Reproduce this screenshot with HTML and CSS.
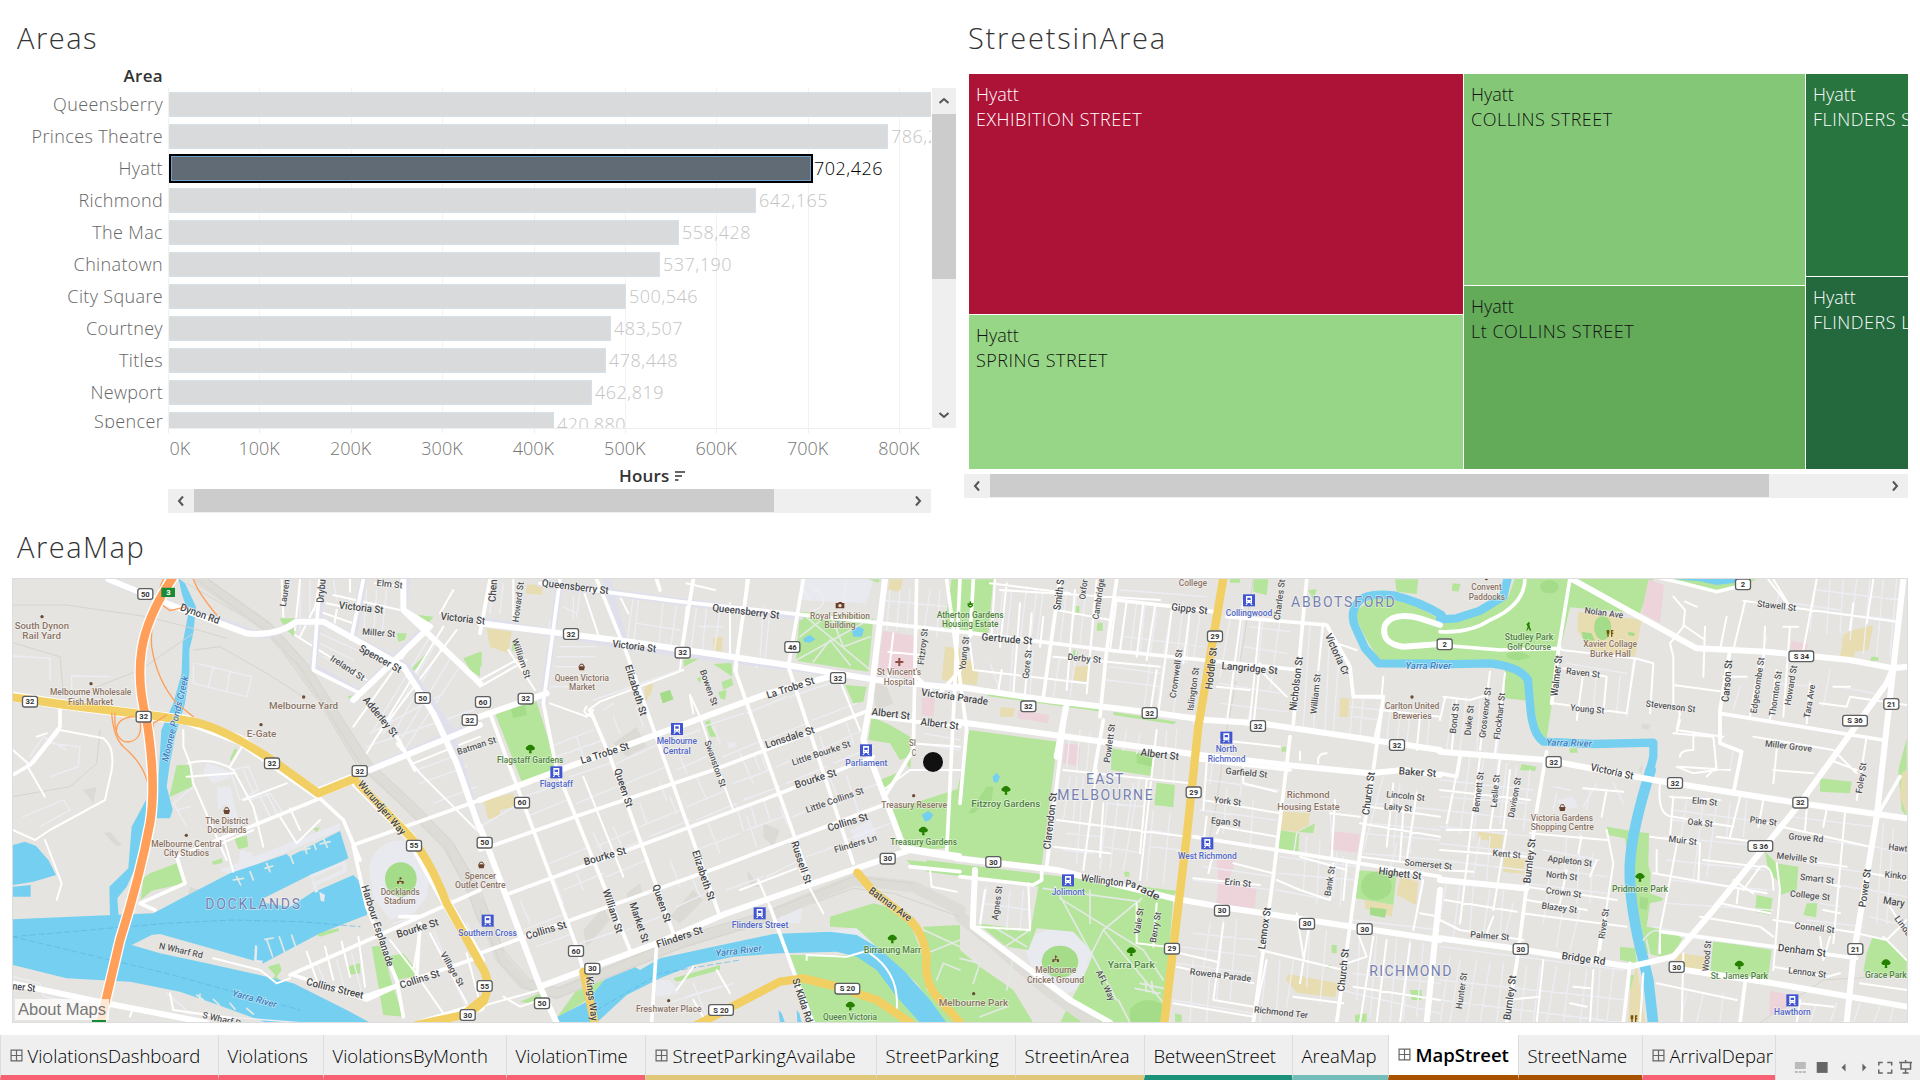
FILE: index.html
```html
<!DOCTYPE html>
<html lang="en">
<head>
<meta charset="utf-8">
<title>MapStreet</title>
<link rel="stylesheet" href="styles.css">
</head>
<body>
<svg class="defs" aria-hidden="true">
  <symbol id="chev" viewBox="0 0 12 12"><path d="M8 1.5 4 6l4 4.5" fill="none" stroke="#555" stroke-width="2"/></symbol>
  <symbol id="grid" viewBox="0 0 12 12"><path d="M1 1h10v10H1zM6 1v10M1 6h10" fill="none" stroke="#666" stroke-width="1.1"/></symbol>
</svg>
<main class="dashboard">
  <div class="top">
    <section class="areas">
      <h2 class="title">Areas</h2>
      <div class="head">Area</div>
      <div class="chart">
        <div class="plot">
          <div class="row"><span class="name">Queensberry</span><i class="bar" style="width:780px"></i></div>
          <div class="row"><span class="name">Princes Theatre</span><i class="bar" style="width:719px"></i><span class="val">786,249</span></div>
          <div class="row sel"><span class="name">Hyatt</span><i class="bar" style="width:644px"></i><span class="val">702,426</span></div>
          <div class="row"><span class="name">Richmond</span><i class="bar" style="width:587px"></i><span class="val">642,165</span></div>
          <div class="row"><span class="name">The Mac</span><i class="bar" style="width:510px"></i><span class="val">558,428</span></div>
          <div class="row"><span class="name">Chinatown</span><i class="bar" style="width:491px"></i><span class="val">537,190</span></div>
          <div class="row"><span class="name">City Square</span><i class="bar" style="width:457px"></i><span class="val">500,546</span></div>
          <div class="row"><span class="name">Courtney</span><i class="bar" style="width:442px"></i><span class="val">483,507</span></div>
          <div class="row"><span class="name">Titles</span><i class="bar" style="width:437px"></i><span class="val">478,448</span></div>
          <div class="row"><span class="name">Newport</span><i class="bar" style="width:423px"></i><span class="val">462,819</span></div>
          <div class="row last"><span class="name">Spencer</span><i class="bar" style="width:385px"></i><span class="val">420,880</span></div>
        </div>
        <div class="vscroll"><svg class="up"><use href="#chev"/></svg><i class="vthumb"></i><svg class="down"><use href="#chev"/></svg></div>
      </div>
      <div class="ticks"></div>
      <div class="axis"><span>0K</span><span>100K</span><span>200K</span><span>300K</span><span>400K</span><span>500K</span><span>600K</span><span>700K</span><span>800K</span></div>
      <div class="axis-title">Hours <svg width="11" height="11" viewBox="0 0 11 11"><path d="M0 1h10M0 5h7M0 9h3.500" stroke="#666" stroke-width="2"/></svg></div>
      <div class="hscroll left-scroll"><svg><use href="#chev"/></svg><i class="hthumb"></i><svg class="right"><use href="#chev"/></svg></div>
    </section>
    <section class="streets">
      <h2 class="title">StreetsinArea</h2>
      <div class="treemap">
        <div class="col col1"><div class="cell red">Hyatt<br><b>EXHIBITION STREET</b></div><div class="cell g1">Hyatt<br><b>SPRING STREET</b></div></div>
        <div class="col col2"><div class="cell g2">Hyatt<br><b>COLLINS STREET</b></div><div class="cell g3">Hyatt<br><b>Lt COLLINS STREET</b></div></div>
        <div class="col col3"><div class="cell g4">Hyatt<br><b>FLINDERS STREET</b></div><div class="cell g5">Hyatt<br><b>FLINDERS LANE</b></div></div>
      </div>
      <div class="hscroll right-scroll"><svg><use href="#chev"/></svg><i class="hthumb"></i><svg class="right"><use href="#chev"/></svg></div>
    </section>
  </div>
  <section class="area-map">
    <h2 class="title">AreaMap</h2>
    <div class="map-frame">
      <svg id="map" class="map" viewBox="39 27 5682 1329" preserveAspectRatio="none"></svg>
      <span class="about">About Maps</span>
    </div>
  </section>
  <nav class="tabs">
    <a class="tab pink"><svg><use href="#grid"/></svg>ViolationsDashboard</a>
    <a class="tab pink">Violations</a>
    <a class="tab pink">ViolationsByMonth</a>
    <a class="tab pink">ViolationTime</a>
    <a class="tab sand"><svg><use href="#grid"/></svg>StreetParkingAvailabe</a>
    <a class="tab sand">StreetParking</a>
    <a class="tab sand">StreetinArea</a>
    <a class="tab green">BetweenStreet</a>
    <a class="tab teal">AreaMap</a>
    <a class="tab brown active"><svg><use href="#grid"/></svg>MapStreet</a>
    <a class="tab brown">StreetName</a>
    <a class="tab pink clip"><svg><use href="#grid"/></svg>ArrivalDepar</a>
    <svg class="tools" viewBox="0 0 144 45" width="144" height="45">
      <path d="M19 27h11v7H19zM19 36h3v2h-3zM23 36h3v2h-3zM27 36h3v2h-3z" fill="#bbb"/>
      <path d="M41 27h11v11H41z" fill="#666"/>
      <path d="M70 28.500v8l-4-4zM87 28.500v8l4-4z" fill="#666"/>
      <path d="M103.500 30.500v-3h4M112 27.500h4.500v3M116.500 34.500v3.500H112M107.500 38h-4v-3.500M124 27.500h13M126 27.500v6.500h9.500v-6.500M130.500 34v4M127.500 38h6M130.500 25v2" fill="none" stroke="#666" stroke-width="1.500"/>
    </svg>
  </nav>
</main>
<script src="map.js"></script>
</body>
</html>
```
FILE: styles.css
```css
* { box-sizing: border-box; }
body { margin: 0; background: #fff; font-family: "Open Sans", "Noto Sans", sans-serif; font-weight: 330; color: #333; overflow: hidden; }
.defs { position: absolute; width: 0; height: 0; }
.dashboard { display: flex; flex-direction: column; width: 1920px; height: 1080px; }
.top { display: flex; height: 520px; }
.areas { width: 956px; }
.title { margin: 0; font-size: 29px; font-weight: 310; line-height: 38px; letter-spacing: 1.5px; color: #333; }
.areas .title { padding: 19px 0 0 17px; height: 64px; }
.head { width: 163px; height: 24px; line-height: 24px; text-align: right; font-size: 17px; font-weight: 600; letter-spacing: .3px; color: #333; }
.chart { display: flex; height: 340px; }
.plot { width: 931px; overflow: hidden; background: repeating-linear-gradient(90deg, #f2f2f2 0 1px, transparent 1px 91.4px) 168px 0 no-repeat; }
.row { display: flex; align-items: flex-start; height: 32px; font-size: 18px; line-height: 33px; white-space: nowrap; }
.name { flex: none; width: 163px; margin-right: 6px; text-align: right; letter-spacing: .35px; color: #666; }
.bar { flex: none; height: 25px; margin-top: 4px; background: #d8dadc; border: 1px solid #d6e0e8; border-left: 0; }
.val { margin-left: 3px; color: #c4c4c4; letter-spacing: .5px; }
.sel .bar { height: 29px; margin-top: 2px; background: #616b75; border: 2px solid #000; box-shadow: inset 0 0 0 1px #6c9fca; }
.sel .val { margin-left: 1px; color: #000; }
.last .name { line-height: 27px; }
.vscroll { display: flex; flex-direction: column; align-items: center; width: 24px; margin-left: 1px; background: #efefef; }
.vscroll svg { width: 12px; height: 12px; margin: 7px 0; }
.up { transform: rotate(90deg); }
.vscroll .down { transform: rotate(-90deg); margin-top: auto; }
.vthumb { width: 24px; height: 165px; background: #ccc; }
.ticks { width: 763px; height: 5px; margin-left: 168px; border-top: 1px solid #eee; background: repeating-linear-gradient(90deg, #eee 0 1px, transparent 1px 91.4px); }
.axis { display: flex; margin-left: 213.500px; height: 31px; font-size: 18px; line-height: 30px; color: #757575; }
.axis span { flex: none; width: 91.400px; text-align: center; }
.axis span:first-child { width: 45px; margin-left: -45px; padding-left: 1px; text-align: left; }
.axis-title { height: 25px; padding-left: 619px; font-size: 17px; line-height: 24px; font-weight: 600; letter-spacing: .2px; color: #333; }
.axis-title svg { margin-left: 1px; }
.hscroll { display: flex; align-items: flex-start; height: 24px; background: #efefef; }
.hscroll svg { width: 12px; height: 12px; margin: 6px 7px; }
.hscroll .right { transform: scaleX(-1); margin-left: auto; }
.hthumb { height: 23px; background: #ccc; }
.left-scroll { width: 763px; margin-left: 168px; }
.left-scroll .hthumb { width: 580px; }
.streets { width: 944px; margin-left: 8px; }
.streets .title { padding: 19px 0 0 4px; height: 74px; letter-spacing: 1.8px; }
.treemap { display: flex; gap: 1px; width: 939px; height: 395px; margin-left: 5px; }
.col { display: flex; flex-direction: column; gap: 1px; overflow: hidden; }
.col1 { width: 494px; } .col2 { width: 341px; } .col3 { width: 102px; }
.cell { padding: 8px 0 0 7px; font-size: 18px; line-height: 25px; white-space: nowrap; color: #111; flex: 1; }
.cell b { font-weight: inherit; letter-spacing: .5px; }
.red { flex: 0 0 240px; background: #ad1237; color: #fff; }
.g1 { background: #97d686; }
.g2 { flex: 0 0 211px; background: #84c877; }
.g3 { background: #63aa59; }
.g4 { flex: 0 0 202px; background: #29753f; color: #fff; }
.g5 { background: #24693d; color: #fff; }
.right-scroll { margin-top: 5px; width: 944px; }
.right-scroll .hthumb { width: 779px; }
.area-map { height: 515px; }
.area-map .title { height: 58px; padding: 8px 0 0 17px; }
.map-frame { position: relative; width: 1896px; height: 445px; margin-left: 12px; border: 1px solid #ddd; overflow: hidden; }
.map { display: block; width: 1894px; height: 443px; background: #e6e4e0; }
.about { position: absolute; left: 2px; bottom: 2px; padding: 0 3px; font: 400 16.500px/21px "Liberation Sans", sans-serif; color: #777; background: rgba(255,255,255,.75); }
.tabs { display: grid; grid-template-columns: 218px 105px 183px 139px 231px 139px 129px 148px 96px 130px 124px 133px 145px; height: 45px; background: #efefef; }
.tab { display: flex; align-items: center; height: 45px; padding: 2px 0 0 8.500px; border-left: 1px solid #ddd; border-bottom: 5px solid; font-size: 18.500px; font-weight: 310; line-height: 26px; color: #000; white-space: nowrap; overflow: hidden; }
.tab > svg { flex: none; width: 13px; height: 13px; margin: 0 5px 2px 0; }
.pink { border-bottom-color: #f76174; } .sand { border-bottom-color: #dfc678; letter-spacing: .15px; } .green { border-bottom-color: #1b9179; } .teal { border-bottom-color: #74bcba; } .brown { border-bottom-color: #a85200; }
.active { padding-top: 0; background: #fff; font-weight: 650; }
.tools { border-left: 1px solid #ddd; }

.park { fill: #b5e59b; } .pitch { fill: #a5dc8a; } .ped { fill: #e9eaf0; } .water { fill: #75cff0; } .land { fill: #e6e4e0; }
.school { fill: #e8dcb1; } .hospital { fill: #ecd4da; } .shade { fill: #dcdad4; }
.line { fill: none; stroke-linejoin: round; stroke-linecap: round; }
.river { stroke: #75cff0; stroke-width: 25; } .stream { stroke: #75cff0; stroke-width: 32; }
.rail { stroke: #d5d4cf; stroke-width: 3; } .yard { stroke: #dddcd7; stroke-width: 34; }
.faint { stroke: #edeef5; stroke-width: 4; } .minor { stroke: #fff; stroke-width: 6; } .street { stroke: #fff; stroke-width: 11; }
.case { stroke: #dfe0ec; stroke-width: 22; } .major { stroke: #fff; stroke-width: 18; } .path { stroke: #e3e9e4; stroke-width: 5; }
.yellow { stroke: #f2cf62; stroke-width: 25; } .ycase { stroke: #fff; stroke-width: 30; }
.motor { stroke: #ff9f59; stroke-width: 26; } .mcase { stroke: #fff; stroke-width: 34; } .ramp { stroke: #ff9f59; stroke-width: 4; }
.dash { stroke: #5ab4e2; stroke-width: 2; stroke-dasharray: 16 10; }
.map text { font-family: Roboto, sans-serif; font-weight: 500; paint-order: stroke; stroke: rgba(255,255,255,.55); stroke-width: 4px; }
.map .s { font-size: 31px; fill: #45474a; } .map .m { font-size: 27px; fill: #515356; }
.map .p { font-size: 27px; fill: #8b7365; } .map .g { font-size: 27px; fill: #4f8240; } .map .b { font-size: 27px; fill: #5066c8; }
.map .w { font-size: 29px; fill: #3d7fc0; font-style: italic; } .map .d { font-size: 42px; fill: #7481b1; font-weight: 400; }
.shield { fill: #fff; stroke: #5c5e60; stroke-width: 4; } .map .n { font-size: 23px; font-weight: 700; fill: #333; stroke: none; }
.map .n.state { fill: #fff; }
```
FILE: map.js
```javascript
// The map is drawn in four side-by-side tiles, each 1440 units wide.
const TILE = 1440;
const svg = document.getElementById('map');
const NS = 'http://www.w3.org/2000/svg';
function add(tag, attrs, text) {
  const el = document.createElementNS(NS, tag);
  for (const k in attrs) el.setAttribute(k, attrs[k]);
  if (text) el.textContent = text;
  svg.appendChild(el);
  return el;
}
function layer(cls, tiles) {
  tiles.forEach((d, i) => { if (d) add('path', { d, class: cls, transform: `translate(${i * TILE} 0)` }); });
}

layer('shade', [
  'M312 790L330 785L365 825L350 830ZM250 660L290 650L280 700ZM570 950L600 960L560 1000Z',
  'M400 520L470 470L500 530L440 560ZM570 1040L640 960L670 990L600 1060ZM850 760L900 780L880 830L850 800ZM800 900L840 950L810 950ZM440 970L480 940L490 980L440 990ZM310 1080L370 1010L390 1050L320 1130ZM1170 330L1220 350L1240 400L1190 420Z',
  '', 'M605 460L632 465L625 480L605 475ZM595 600L610 585L605 610Z'
]);
layer('ped', [
  'M690 625L640 640L610 610L620 580L680 600ZM650 650L690 650L720 770L700 780L680 700L655 720ZM660 900L1020 760L1020 780L850 850L690 915ZM720 840L760 850L740 900L715 890ZM1110 920A92 90 0 1 1 1290 920L1280 980L1240 1030L1170 1050L1120 980Z',
  'M960 28L1180 28L1160 100L960 90ZM890 1010L930 1030L970 1000L960 1060L900 1060ZM1110 780L1170 750L1190 790L1130 820ZM970 1090L1170 1070L1210 1120L1160 1130L1100 1100L980 1105ZM520 1230L570 1230L600 1270L530 1280ZM740 520L770 515L770 530L745 535Z',
  'M195 1130Q220 1080 300 1075Q390 1090 400 1150Q400 1250 320 1270Q220 1260 195 1130ZM690 450L720 450L700 465Z',
  'M350 690L400 680L415 710L370 720Z'
]);
layer('park', [
  'M838 145L885 145L882 200L860 180ZM1230 300L1280 250L1283 260L1235 308ZM1190 190L1220 190L1215 210L1195 215ZM1254 135L1300 140L1280 165ZM1390 265L1440 245V320L1410 300ZM1042 380L1068 372L1055 392ZM530 585L568 585L576 650L508 682ZM705 535L712 540L692 575L690 565ZM703 805L740 797L745 830L715 838ZM430 925L450 910L530 880L555 940L455 962L422 990ZM635 875L665 865L668 878L640 885ZM803 1190L838 1180L845 1200L830 1220L860 1250L815 1240L825 1215ZM1040 1190L1080 1180L1080 1210L1045 1215ZM1115 1130L1150 1125L1170 1220L1210 1340L1150 1335ZM1160 1160L1210 1150L1250 1200L1240 1220L1190 1230ZM942 1090L1015 1075L1018 1082L960 1100ZM940 775L960 772L950 787Z',
  'M45 430L170 395L235 605L125 635ZM0 245L5 245V290H0ZM960 125L1180 145L1165 305L948 272ZM610 270L665 262L612 290ZM700 282L755 278L757 320ZM540 370L570 360L580 388L548 400ZM725 335L755 325L760 345L730 360ZM715 365L740 360L735 390L720 385ZM650 325L665 320L660 340ZM675 455L690 450L695 475L710 500L690 500ZM1095 345L1160 350L1150 395L1120 400ZM1175 440L1230 465L1290 500L1290 560L1260 570L1230 520L1165 510ZM1275 570L1295 545L1290 600ZM1200 630L1260 605L1220 660ZM1230 720L1300 700L1440 655V830L1330 840L1265 830ZM1415 28H1440V185H1390ZM1280 870L1440 885V910L1300 895ZM1165 28H1200L1195 38ZM1050 1040L1180 1000L1220 1010L1290 1060L1330 1160L1340 1260L1440 1358H1390L1310 1240L1190 1130L1130 1075L1050 1070ZM930 1155L1170 1155L1210 1220L1270 1290L1320 1358H990L950 1210ZM1330 1070L1440 1065V1358L1370 1290L1345 1200ZM220 1358L290 1260L350 1235L380 1230L320 1290L240 1340ZM120 1295L180 1270L220 1310ZM400 1185L450 1170L450 1190L400 1205ZM580 1225L720 1185L720 1200L590 1235ZM98 215L108 215L108 245L95 240Z',
  'M0 28H100L85 190L0 180ZM28 480L292 515L245 885L-45 850ZM455 535L582 555L575 618L453 600ZM590 638L645 645L640 712L583 705ZM-100 870L100 895L650 962L640 980L610 1358H300L380 1200L400 1150L340 1085L230 1075L205 1140L210 1090L235 950L-100 905ZM0 1140L60 1190L160 1260L220 1358H0ZM90 370L430 410L425 425L80 378ZM460 425L650 455L640 463L460 435ZM960 780L1018 790L1015 850L950 840ZM1015 785L1065 760L1060 790ZM1190 900L1310 910L1300 1005L1188 985ZM880 28H925L920 75L880 65ZM1305 28H1375L1370 72L1310 65ZM340 108H358V130H340ZM412 158H428V182H410ZM340 240H353V258H338ZM1205 110L1240 80L1310 85L1380 115L1445 150V275H1260L1215 200L1180 130ZM1045 60L1070 58L1060 90ZM965 530H978V545H965ZM1350 1260H1385V1290H1355ZM645 1330L665 1335V1358H645ZM1185 1335L1220 1330V1358H1185ZM1115 1125H1130V1150H1115ZM1100 1185H1115V1195H1100ZM492 905H508V920H495ZM50 1060L210 1080L205 1140L140 1130ZM810 25H840V38H810Z',
  'M0 155L60 150L150 115L205 80L225 24H640L600 130L390 112L360 240L320 505L290 490L270 320L220 285H0ZM195 290L265 330L260 392L195 385ZM38 40L62 42L55 65L35 62ZM500 770L590 785L627 790L625 885L632 910L630 970L670 985L665 992L630 1000L620 1070L735 1090L705 1145L665 1160L620 1150L585 985L555 805L505 795ZM540 1130L585 1135L590 1180L540 1170ZM820 1110L995 1140L985 1220L970 1235L810 1215ZM975 845L1010 880L1075 890L1070 960L1020 975L1020 940L985 905ZM950 975L998 985L990 1035L945 1025ZM1100 1000L1132 1000L1128 1042L1090 1035ZM1140 625L1235 635L1230 670L1140 665ZM245 582L290 590L285 603L240 600ZM1298 1100L1340 1110L1400 1165V1225L1270 1205L1280 1150ZM1400 505V740L1385 720L1375 600ZM655 28L740 45L820 68L890 55L950 28H900L850 35L780 24ZM572 1215L590 1215L600 1260L570 1260ZM1295 260H1315V272H1290ZM388 535H412V548H390Z'
]);
layer('school', [
  '', 'M20 175L95 185L85 250L30 230ZM140 45L190 42L185 75L138 70ZM700 205L728 200L725 245L700 240ZM495 350L520 340L515 365L495 400ZM10 690L100 670L105 710L60 720L60 740L25 748ZM1395 230L1440 235V340L1385 330ZM1228 28H1268L1262 65L1225 60Z',
  'M340 290L385 288L380 335L338 330ZM0 265L30 270L55 310L50 345L0 340ZM122 412L165 415L160 440L120 440ZM965 725L1050 730L1045 765L1010 785L960 780ZM985 1212L1030 1220L1135 1240L1125 1282L1010 1268L978 1230ZM1320 920L1375 935L1368 1005L1310 975ZM1215 990L1300 1005L1295 1040L1215 1015ZM1140 385L1168 385L1165 440L1138 440Z',
  'M415 125L605 150L585 260L450 240L412 180ZM1210 195L1240 180L1300 165L1285 240L1245 245L1240 270L1200 265ZM115 785L190 795L185 835L145 835L145 810L115 808ZM190 860L255 868L250 912L190 905ZM720 1150L800 1160L800 1205L745 1200L705 1170ZM590 1180L600 1260L615 1358H565L570 1265ZM1385 610L1400 600V735L1380 680Z'
]);
layer('hospital', [
  '', 'M1210 182L1315 200L1310 330L1195 300L1200 240ZM1325 382L1365 385L1360 440L1325 435Z',
  'M175 420L268 435L265 460L172 445ZM315 520L362 525L355 588L308 580ZM770 870L825 870L820 895L800 940L890 950L885 1015L768 1005L775 940ZM1118 783L1200 793L1193 848L1110 838Z',
  'M625 28L672 45L660 158L605 130ZM1055 212L1105 222L1100 242L1050 238ZM990 1262L1055 1275L1040 1315L988 1335Z'
]);
layer('pitch', [
  'M1155 925A47 48 0 1 1 1250 925A47 55 0 1 1 1155 925Z', 'M90 410L135 405L140 435L100 445ZM540 370L570 360L580 388L548 400Z',
  'M245 1175A55 48 0 1 1 355 1175A55 48 0 1 1 245 1175ZM530 550L580 558L575 590L530 580ZM1203 950A46 45 0 1 1 1295 950A46 40 0 1 1 1203 950ZM1230 1012L1280 1018L1275 1043L1230 1035ZM25 730L80 650L100 650L95 690L40 730ZM510 1320A60 50 0 0 1 620 1320L615 1358H510Z',
  'M462 170A26 32 0 1 1 514 170A26 40 0 1 1 462 170ZM425 185L455 190L465 212L430 210ZM565 185L585 190L582 198L565 196ZM300 50A28 20 0 1 1 356 50A28 20 0 1 1 300 50ZM200 250Q240 235 270 260Q230 280 200 262ZM600 980L625 985L620 1020L598 1015Z'
]);
layer('water', [
  'M535 24L555 40L588 110L580 190L568 240L568 310L555 400L525 500L508 590L500 650L518 720L510 745L470 745L474 650L484 480L520 400L545 310L548 220L565 130L545 70ZM438 690L440 790L412 880L380 950L352 985L356 1040L330 1040L328 950L385 895L395 770ZM38 825L75 815L108 828L145 870L168 915L100 935L38 945ZM38 950L92 945V980H38ZM38 1048L460 1030L545 985L690 910L860 852L868 860L1020 783L1045 865L930 920L945 965L1060 915L1075 930L1090 985L1105 1020L1100 1035L960 1090L790 1180L650 1140L480 1092L455 1095L395 1125L480 1150L620 1180L800 1220L880 1240L1040 1320L1110 1358H800L640 1300L540 1265L390 1235L200 1225L38 1185Z',
  'M230 1342L320 1295L385 1215L460 1188L480 1200L540 1165L700 1130L880 1092L1050 1085L1130 1095L1190 1130L1270 1200L1350 1290L1400 1358H1320L1250 1280L1190 1200L1130 1160L1070 1145L900 1150L760 1160L640 1185L540 1225L440 1275L350 1358H230ZM970 205L990 195L1006 208L990 218L972 215ZM1115 180L1135 168L1152 178L1145 200L1120 200ZM1325 735L1345 722L1360 735L1350 750L1335 755ZM1065 158L1078 152L1080 165ZM895 1320L905 1330L915 1358H900ZM950 1320L958 1330L965 1358H952Z',
  'M98 620L110 608L120 620L112 638L100 635Z', 'M700 28L780 34L830 45L885 38L900 24Z'
]);
layer('land', ['M780 990L930 915L1040 870L1048 898L1060 912L940 965L870 1010L800 1000Z']);
layer('ped', ['M930 915L1035 872L1042 905L950 945L945 935L1030 898L1028 885L940 922L955 965L945 968ZM958 965L975 975L972 995L962 992ZM765 1125L772 1128L770 1170L790 1172L785 1180L762 1175Z']);
layer('line path', ['M710 920L722 945M700 930L730 925M750 905L760 930M800 880L810 905M795 895L818 888M870 855L880 880M912 825L920 850M905 840L930 835M938 812L948 838M968 800L982 832M960 822L990 815M800 1108L818 1160M838 1100L855 1150M875 1095L890 1140M795 1108L820 1104M590 1275L610 1290M600 1272L598 1298M640 1288L658 1305M690 1300L705 1318M740 1315L760 1332']);
layer('line river', ['', '', 'M1445 135Q1380 95 1300 76Q1220 68 1195 95Q1165 130 1190 180L1215 235L1255 280L1445 281', 'M203 24L190 80L120 122L50 145L0 148M0 283L150 280Q240 290 264 330L270 400Q275 490 310 515L460 522L640 518L640 560L620 640']);
layer('line stream', ['', '', '', 'M632 600Q575 780 570 880Q565 980 600 1130L625 1230L640 1365']);
layer('line dash', ['M38 1100L500 1060L700 1050L900 1055L1080 1070M38 1100L500 1210L900 1320', 'M350 1320L540 1210L780 1170']);
layer('line rail', [
  'M38 105L200 105L440 140L560 170L680 205M38 218L180 260L190 370M240 370L420 300L580 190M580 240L660 230L800 310L910 380M300 480L290 580L210 650L38 680M560 40L800 180L960 400L1080 600',
  '', 'M880 28L850 220L800 480L770 700L745 820', 'M960 1358L1060 1290L1150 1230L1400 1215'
]);
layer('line yard', [
  'M600 28L800 170L900 280L1010 450L1100 590L1230 710L1340 820L1410 940L1445 1040',
  'M0 1000L60 1160L130 1240L230 1270L400 1200L600 1120L860 1040L1000 980L1120 930L1300 950L1440 1020', 'M0 1040L100 1120L260 1260L400 1360'
]);
layer('line rail', [
  'M590 28L800 185L900 290L1000 450L1090 595L1220 720L1335 835L1400 960L1440 1060M625 28L815 165L925 285L1030 450L1115 580L1250 705L1360 820L1430 940',
  'M0 960L70 1140L150 1230L240 1255L400 1185L600 1100L860 1025L1000 970L1120 920L1300 940M0 1020L60 1180L130 1250L230 1285L400 1215L600 1135L860 1055M1000 1000L1120 955L1240 970L1440 1040'
]);
layer('line path', [
  '', 'M965 130L1165 295M1175 145L950 270M960 200L1050 130L1090 230L1170 200M1000 275L1050 210L1110 285M1300 1065L1440 1130M1340 1150L1440 1110M1370 1230L1390 1180L1440 1200',
  'M285 950L470 1290M300 985L550 1140L610 1230M545 985L430 1080L380 1180M390 960V1060M250 955L540 995M50 1060L160 1160L140 1260M100 1070L200 1130M120 1140L210 1080M0 1165L60 1180L40 1240M430 1080L620 1310M525 1255L600 1270M540 1240L610 1255M555 1230L560 1265M575 1235L580 1270M475 1290L510 1358M60 1340L140 1310L130 1290',
  'M610 1110Q640 1070 660 1085L655 1150M620 1110L630 1160'
]);
layer('line faint', [
  'M38 258L150 265V330M215 370V318L330 320M590 280L755 320L740 380L580 340V280M640 290L625 350M690 305L680 365M150 520L240 530L235 590L150 620M90 560L130 500L200 540M70 740L190 690L210 720L120 770M690 600L745 590L775 660L720 690ZM730 600L760 670M750 690L810 670L850 730L780 760ZM780 680L810 740M800 670L830 730M580 650L520 700L560 770M530 720L570 710M900 28V180M930 28V170M960 190L1070 240M960 220L1060 270M1000 28L1010 90M1100 60L1090 200M1130 60L1120 200M1160 60L1145 200M890 200L1100 330M970 260L1090 330M1290 200L1120 480M1310 215L1150 490M1320 240L1170 510M1360 250L1190 530M1380 290L1200 560M1100 530L1420 420M1110 490L1330 370M1250 600L1360 560M1260 640L1400 590M1300 700L1430 650M1180 1060L1290 1030M1300 1080L1400 1320M1400 1060L1440 1150M1010 1170L1040 1280M1055 1150L1085 1270M950 1180L980 1250M38 1220L120 1240L130 1280L250 1300M500 1270L560 1320M550 1330L900 1358',
  'M40 40L30 130M70 40L60 130M115 80L110 180M250 110L290 130M280 80V150M300 60L290 140M210 150L195 350M225 190L205 370M240 230H350M230 260H345M225 290H300M220 320H300M215 350H310M460 80L440 220M475 90L460 230M550 90L535 240M590 100L570 250M650 110L630 260M680 110L665 260M720 120L700 265M850 110L840 270M870 120L855 270M660 170H730M470 160L600 180M340 390L600 300M210 530L340 480M230 560L370 510M400 440L420 490M60 520L130 700M0 770L120 700M130 680L250 640M270 620L390 580M410 580L520 530M520 530L660 480M670 470L790 430M800 430L920 380M930 380L1080 330M140 740L260 690M290 700L410 650M440 640L560 590M590 600L700 550M730 560L850 510M860 510L980 460M1000 450L1130 400M210 880L330 830M350 830L460 780M480 770L600 720M620 710L740 660M760 640L870 600M890 590L1010 540M1020 540L1150 480M240 920L350 870M370 860L490 810M510 800L630 750M650 750L770 700M790 690L900 650M920 640L1040 590M1060 580L1180 530M250 960L370 910M380 920L500 870M650 840L780 790M800 780L910 740M940 740L1060 690M1080 680L1200 640M130 1080L260 1030M170 1130L280 1090M300 1120L420 1080M440 1080L540 1040M590 1010L700 960M740 960L850 920M860 920L960 870M980 860L1090 820M1100 810L1230 760M290 500L310 560M470 410L490 470M400 400L370 420M820 550L840 600M840 545L860 600M810 700L830 770M850 690L870 750M570 680L590 730M540 640L560 690M680 750L720 850M800 740L830 830M400 770L430 840M480 700L500 760M340 790L370 850M570 870L600 950M630 910L660 980M220 920L250 1000M290 910L310 960M120 990L150 1060M780 550L820 640M710 590L740 670M650 620L680 690M770 710L790 780M700 470L720 520M600 560L620 610M900 710L920 760M1020 500L1040 560M1100 460L1120 520M1040 600L1080 700M1100 620L1140 740M1230 60L1220 180M1260 60L1250 180M1290 60L1280 180M1350 60L1330 200M1380 60L1370 200M1200 90L1400 110M1330 490L1440 510M1310 520L1440 540M620 1280L720 1250M640 1240L680 1340M560 1300L760 1240M1100 28L1090 100M1000 60A30 30 0 1 1 1000 120M970 60L990 90',
  'M130 60L110 210M155 60L140 210M200 50L180 220M230 60L210 230M250 60L230 220M320 60L300 220M350 80L330 230M380 40L360 220M400 100L390 230M500 100L480 240M530 100L510 250M555 100L540 250M590 120L570 260M635 120L610 260M670 100L650 270M690 110L680 280M720 130L700 270M480 60L740 80M490 200L730 230M90 280L120 360M160 220L150 360M220 240L210 370M300 260L280 380M350 240L330 380M450 290L600 310M440 330L600 350M570 280L550 430M610 280L590 430M660 280L640 430M810 150L780 320M850 150L830 330M910 140L890 320M960 150L930 360M870 170L990 185M850 230L980 250M780 340L960 370M780 400L980 425M870 420L860 470M1050 160L1030 470M1085 160L1060 480M1110 170L1095 480M1140 220L1120 480M1180 380L1170 490M1210 380L1200 500M1170 410L1260 420M1180 440L1260 450M1290 420L1280 520M1320 430L1310 530M1350 430L1340 530M1410 430L1400 540M330 490L320 590M360 480L350 600M390 490L380 600M420 490L410 600M460 470L450 540M500 480L490 540M540 490L530 550M620 480L610 630M650 480L640 640M330 620L310 750M350 620L340 750M370 620L350 880M540 620L490 900M310 680L390 690M440 700L550 710M320 790L420 800M310 840L400 850M430 830L550 850M580 720L560 930M630 730L610 940M450 620L420 900M480 640L450 900M520 640L500 780M570 780L680 800M570 830L660 840M760 560L750 640M850 580L840 680M740 630L960 660M720 720L950 750M800 660L790 790M880 690L870 840M730 890L940 920M700 930L940 960M860 590L960 600M700 990L760 1000M750 1060L730 1200M790 1050L770 1290M830 1050L810 1290M700 1090L890 1110M660 1130L890 1160M650 1180L880 1210M640 1290L880 1330M700 1170L690 1358M750 1190L740 1358M920 1170L900 1358M960 1170L950 1320M1000 1170L980 1310M1050 1060L1040 1250M1100 1080L1080 1300M1200 1090L1190 1290M1250 1100L1230 1340M1310 1110L1290 1358M1350 1110L1330 1350M1390 1120L1370 1340M950 700L1110 720M1010 790L1000 860M1040 800L1030 960M1080 810L1070 1000M1130 850L1120 980M1150 860L1140 1010M960 860L1190 890M960 910L1180 930M950 960L1110 990M1110 720L1120 870M1270 620L1210 840M1320 640L1300 830M1370 660L1350 850M1210 790L1440 810M1230 760L1440 780M1250 700L1440 720M1210 850L1440 870M1310 820L1290 900M1390 900L1360 1080M1180 1050L1440 1080M1180 1210L1440 1240M1140 1260L1440 1330M80 950L60 1080M150 960L140 1080M190 960L180 1080M70 1000L210 1020',
  'M40 380L20 540M80 380L60 540M120 390L110 550M190 380L170 560M60 560L20 780M90 560L60 790M130 570L100 800M175 570L150 780M200 580L180 760M230 590L210 750M270 600L250 780M0 630L280 660M0 680L260 700M0 720L270 750M0 770L280 800M0 820L260 850M0 870L250 900M120 800L100 920M150 800L140 930M380 280L560 310M430 300L410 450M470 300L460 420M500 320L490 430M540 320L530 430M580 270L560 440M340 650L390 660M350 670L340 720M450 660L440 720M470 640L430 710M520 640L550 700M310 840L480 870M270 890L500 920M260 940L500 970M380 800L370 960M420 790L410 1000M460 850L450 1000M330 900L310 1060M370 1010L350 1130M420 1020L390 1140M20 940L0 1040M60 940L40 1100M100 950L90 1080M150 960L130 1090M190 960L180 1100M220 1000L190 1110M0 1130L550 1200M30 1160L0 1358M60 1170L30 1358M110 1170L80 1358M150 1180L120 1358M190 1180L170 1358M260 1190L240 1358M300 1190L280 1358M350 1190L320 1358M390 1200L370 1358M440 1200L420 1358M480 1200L470 1358M520 1200L500 1358M0 1230L560 1290M0 1290L550 1358M670 800L980 830M680 870L970 900M690 930L980 960M680 1000L1000 1020M720 1100L960 1130M700 690L690 790M740 690L720 820M790 690L760 930M830 700L800 920M870 700L860 800M920 690L910 800M700 720L1000 760M700 750L880 770M1020 60L1010 100M1060 100L1200 120M1130 28L1110 180M1170 28L1160 190M1210 28L1200 190M1250 28L1230 210M1290 28L1270 250M1330 28L1310 260M1370 28L1350 260M1130 60L1380 90M1120 120L1370 150M1000 340L1130 350M1170 300L1150 410M1200 350L1300 370M1050 740L1300 770M1060 800L1290 830M1100 880L1290 910M1110 930L1280 960M1140 1000L1200 1010M1100 1050L1270 1070M1330 760L1310 1060M1360 780L1340 1060M1300 830L1400 850M1290 960L1400 980M1290 1040L1400 1070M740 1270L720 1358M790 1270L770 1358M850 1270L840 1358M1080 1300L1070 1358M1130 1300L1110 1358M1190 1300L1170 1358M1260 1300L1240 1358M1320 1310L1300 1358M1360 1310L1350 1358M640 1070L780 1100M760 490L820 500M880 540L870 600M900 350L880 420M980 200L930 430'
]);
layer('line minor', [
  'M38 540L90 585M100 580L180 480L310 505Q345 530 335 600L315 690L150 780L105 810L38 780M80 585L135 680M110 500L140 490M135 810L185 940L170 990M550 480V530L570 580L580 640L680 870M565 580Q640 560 700 600L760 710L790 830M750 490L690 590M560 620L700 610M730 690L860 640M770 760L930 700M670 800L700 905M640 830L760 780M840 740L890 820L960 750M870 715L900 780M850 140L845 30M900 30L885 180M1050 28V65M1000 75L1200 120M980 100L1050 115M1010 120L1000 180M1070 130L1050 210M885 195L1100 330M1280 160L1060 470M1330 170L1100 550M1370 180L1130 500M1240 580L1440 500M1190 520L1260 610L1440 790M1360 60L1320 130M1260 1080L1240 1200M1170 1110L1240 1200L1330 1330M1290 1090L1400 1300M920 1145L950 1230M975 1130L1000 1230M1025 1115L1050 1220M1075 1100L1095 1250M640 1165L780 1200L830 1240L870 1225M510 1270L520 1320L700 1345M400 1310L390 1340M1400 1150L1440 1300M960 28L945 110L900 200M1060 160L945 120M1125 40L1210 50',
  'M100 28L100 160M205 28L180 40M310 60L360 210M420 80L445 130M600 300L620 110M325 420L360 395L610 300M340 420L320 440L210 400M0 330L110 270M85 240L165 360M0 350L140 270M320 410Q300 430 340 440M630 375L660 440L700 560L760 720M630 380L640 430M750 100V250M800 28L770 300M705 60L620 40M1085 345L1140 480M1210 660L1290 600H1440M1290 520L1440 530M1225 300L1310 310M1240 190L1225 320M1225 245L1320 255M835 930L870 1010M960 900L1030 1030M780 960L950 895M0 1310L180 1260M70 1280L120 1310L180 1290M1350 900L1355 950L1430 965M980 1170V1155L1100 1160L1170 1140M1170 1150Q1260 1210 1250 1320M590 1260L640 1190M640 1290L680 1358M710 1200L750 1270M310 620L430 920M830 270L830 290',
  'M105 28L95 190M90 40L330 70M140 40L120 230M180 100L160 370M215 130L195 370M250 140L240 230M345 60L320 360M410 30L380 370M470 90L450 240M500 95L480 240M550 100L530 260M585 110L560 270M635 120L595 430M690 120L670 280M850 90L800 460M900 150L870 450M1090 160L1075 300M120 60L600 90M290 120L450 150M280 260L600 290M40 300L380 340M30 220L40 300M125 300L115 360M590 300L570 430M900 280L880 470M980 380L900 300M770 350L870 360M1180 380L1270 385L1240 520M1130 220L1190 240M1260 420L1440 440M1380 440L1370 540M1270 320L1265 380M590 480L540 930M310 600L690 640M290 750L680 800M280 830L450 850M410 600L370 900M430 700L420 860M560 630L540 850M740 580L730 720M780 510L960 530M850 590L850 640L950 665M730 690L960 730M740 740L730 820M770 790L780 770L950 800M700 925L900 945M760 850L745 910M820 880L940 910M1110 730L1200 740M1125 690L1115 860M1020 860L1160 900M950 930L1020 960L1110 990L1120 880M1160 880L1150 990M1330 720L1320 870M1440 740L1230 710M1200 760L1440 800M1010 1030L1030 1160M1045 1080L1020 1240M900 1140L1150 1200M920 1170L880 1358M790 1060L760 1290L880 1310M660 1150L770 1175M650 1190L880 1240M1190 1080L1220 1160L1160 1180M1240 1100L1200 1358M1280 1110L1250 1358M1180 1250L1440 1290M530 1120L620 1130M530 1000L530 1120M590 1000L580 1130M50 1070L210 1080M75 960L60 1060M205 940L210 1080M640 1300L880 1340M1000 1280L1150 1300M1350 1120L1320 1358M1200 860L1440 890M1390 930L1360 1080M1300 640L1280 830M1370 670L1340 870M1380 1030L1440 1040M1020 545V570M1075 580Q1070 550 1100 550',
  'M10 380L90 390L140 375M150 305L120 540M195 310L165 550M35 540L50 390M0 450L15 385M0 660L270 690M20 780L200 780M60 560L20 760M120 560L90 800L60 1060M180 570L150 780M200 780L160 1020M210 600L190 780M0 840L260 860M0 900L100 905M15 990L230 1025M60 1080L250 1110M370 295L500 320L490 430M430 310L410 450M340 400L560 430L585 265L640 280L630 430M365 240L580 265M500 660L485 740M430 655L550 665M500 780L520 880L480 1140M260 950L530 990M260 990L440 1020M250 1030L560 1070M270 790L500 810M425 800L415 850M380 900L360 1000M470 870L450 920M660 640Q650 740 700 740L880 770M690 680L840 690M700 680L690 800M630 800L780 820L775 930M715 800L690 930L660 1080V1150M640 910L980 970M650 840V910M790 870L960 890M870 600L720 590M700 490L820 500L830 600L760 610L710 590M720 560Q720 540 760 540V490M720 450L710 490M800 620L830 590M700 80L735 120L730 170L690 220L700 260V400L720 430L710 480L850 500M735 95L770 110M730 165L795 210M700 345L850 365M795 170L790 320M860 140L840 240M915 95L880 240M910 92L1370 155M985 28L1040 100M1000 28L1050 110M1130 28L1090 240M1240 100L1230 180M1300 28L1280 160M975 170L970 290M1050 170L1030 440M1075 170L1030 170M920 320H850M960 270L930 440M1010 300L990 450M1110 340L1100 460M1180 350H1230M1140 400L1220 410L1230 380L1400 405M940 500L1180 540L1250 610M1010 540L1000 640M1240 490L1170 570L1250 600M1000 600L1120 610M1280 500L1250 690M900 680L870 800M830 800L980 820M970 690L955 770M1100 720L1095 780M1160 720L1150 770M980 760L1290 830M1215 730L1180 1120M1080 870L1220 890M1010 880L1020 960L1000 1200M940 970L880 930M910 960L960 890Q1000 880 1000 960M1160 940L1200 950M1150 1020L1200 1030M1000 1050L1260 1090M840 1000L990 1030M780 1040L960 1070L1000 1100M890 1000L895 960M1250 1090L1340 1110L1400 1050M1330 1100L1400 1170M1350 1010L1400 1090M1290 910L1400 930M1000 1190L1160 1220L1200 1210M730 1150L725 1358M650 1240L890 1290M610 1210L600 1358M1080 1290L1070 1358M1080 1300L1180 1310M1260 1240L1400 1260M0 1050L60 1080M300 1280L200 1290M310 1170L290 1358M390 1300L440 1310M400 1250L450 1255M460 1200L450 1358M480 1100L470 1180M160 1040L140 1090M1140 1100L1150 1170L1170 1100'
]);
layer('line case', [
  'M325 28L500 100L780 195Q840 190 890 155L970 155L1220 290L1350 480L1440 780M200 1L230 1M1090 28L1060 200M965 50L940 290L1080 370M1220 28L1210 120L1280 170L1060 390M1110 600L1380 480',
  'M0 150L450 230L920 290L1200 330L1440 355M180 40L600 95L960 140M240 28L190 400M380 28L440 240'
]);
layer('line street', [
  'M180 415V470L90 585L38 615M465 1020L420 1000L555 940L530 860L960 685M1060 825L1440 690M870 1215L1440 960M1090 1280L1440 1160M965 690L1030 750L1080 870M1200 1040L1260 1040M1190 500L1245 600M1080 370L940 300L960 28M1090 28L1055 200M1060 830L1100 1010L1190 1230L1210 1340M1260 1060L1250 1220M880 1215L1100 1290L1210 1240',
  'M0 190L30 28M180 40L600 95L1440 185M240 28L190 400L230 600M350 28L440 250L720 1040M530 28L540 60M640 28L605 240M970 28L925 290L1120 880M805 28L765 300L990 930M1175 440L1440 470M1310 28L1300 540L1220 670M1440 300L1370 380L1300 310M1440 28L1400 850M330 420L390 560L580 1090M0 840L300 735L700 600L1170 420M90 970L620 775L900 670L1180 560M30 430L290 1130L310 1200M230 600L450 1140M870 1010L950 1230L1000 1358M530 1120L515 1358M1290 890L1440 905M0 690L240 600L850 375L1050 320M0 1150L300 1040L720 890L1210 705M1270 830L1440 855',
  'M300 28L250 380M470 28L440 240L420 440M0 185L440 240L1020 300M-40 28L20 480L0 700M470 90L640 110L760 125M800 140L1100 165L1170 290L1180 380L1270 380M1040 28L1000 460M1270 380L1240 600L1200 850L1130 1358M990 500L940 920L880 1358M700 800L1200 880L1440 920M45 900L40 1070M0 920L220 945L245 930V890M320 400L260 890M40 30L30 200M430 450L400 620M720 570L990 600',
  'M0 610L50 620L60 560M390 24L355 240L335 400M320 545L290 720L230 1180L200 1358M0 925L260 960M570 1180L550 1358M870 240L840 420V520L905 545L880 670M840 430L1330 510M0 185Q90 190 150 150Q255 105 255 24M0 225L180 240L360 235M660 24L730 40L830 65L890 50M1380 620L1310 740M915 1240L900 1358M665 1085L1000 1130L1250 1165'
]);
layer('line major', [
  'M325 28L500 100L740 190Q830 200 890 155L970 155L1210 290L1300 430L1370 580L1440 780M1210 120L1290 170L1060 390M1210 28V120L1440 340M38 1240L320 1300L620 1358M1110 600L1440 465',
  'M0 160L450 215L920 285L1190 330L1440 355M0 440L200 370M1215 28L1170 400L1150 510L1270 830M0 770L180 1250L230 1358M180 1250L340 1190L530 1120L740 1030L1130 895L1290 840L1440 865M0 690L240 600L850 375L1050 320',
  'M-10 350L260 390L590 430L740 450L900 460L1440 540M-10 455L320 500L720 555L980 585L1230 610L1330 600L1440 615M320 400L290 560M-10 865L290 900L640 985L780 1010L1440 1110M45 900L38 1070L330 1290L450 1358M1275 105M1440 165L1380 145Q1300 125 1275 165Q1260 220 1330 230L1440 222M1440 960L1400 1358',
  'M0 545L320 570L640 630L1080 700L1400 745M0 1105L220 1135L570 1190L700 1160L820 1020L1080 700L1340 340L1360 295L1400 290M400 30L770 235L980 245L1230 270L1360 295M1390 28L1360 295L1310 740L1240 1160L1220 1358M700 1195L1000 1240L1400 1310M0 930L260 955'
]);
layer('line ycase', ['M38 380L200 405L560 450L720 510L950 670L1060 625M1070 640L1230 800L1340 1000L1440 1170M1260 1365L1440 1310']);
layer('line yellow', [
  'M38 382L200 405L420 432Q560 450 600 460Q700 490 830 580L955 670L1065 625M1075 640L1230 800Q1290 870 1340 1000L1440 1180M1250 1365L1390 1335L1445 1290',
  'M-5 1175Q40 1230 10 1295L-20 1320M310 1205L345 1365M1132 908L1180 965L1290 1050Q1330 1090 1340 1160Q1330 1240 1380 1290L1440 1358M650 1365L900 1235L970 1225L1070 1250L1190 1290L1290 1358',
  'M790 24L715 470L680 800L612 1365'
]);
layer('line ramp', ['M490 28Q470 70 480 100L510 122L560 110M580 28Q595 70 650 135M475 120Q450 160 455 230Q470 330 530 400L580 440M335 430Q340 500 370 530Q430 580 443 640M345 430Q340 515 385 516Q430 510 420 450M350 480Q350 445 400 440M460 490V460L500 435']);
layer('line mcase', ['M520 20Q440 140 425 240Q410 340 440 450Q470 640 450 760Q420 920 360 1110L300 1365']);
layer('line motor', ['M520 20Q440 140 425 240Q410 340 440 450Q470 640 450 760Q420 920 360 1110L300 1365']);

// Labels that follow a street: text, centre-line start and end.
const along = {
  s: [
    [['Dynon Rd', 542, 110, 658, 152], ['Victoria St', 1017, 105, 1150, 120], ['Victoria St', 1322, 138, 1455, 153], ['Spencer St', 1080, 232, 1202, 300], ['Adderley St', 1096, 384, 1188, 496], ['Wurundjeri Way', 1080, 636, 1212, 790], ['Bourke St', 1190, 1094, 1314, 1055], ['Collins St', 1200, 1246, 1318, 1208], ['Collins Street', 920, 1234, 1090, 1276], ['Harbour Esplanade', 1094, 946, 1172, 1188], ['Drybu', 960, 98, 966, 28], ['ner St', 38, 1248, 106, 1255]],
    [['Queensberry St', 186, 38, 386, 62], ['Queensberry St', 697, 112, 898, 136], ['Victoria St', 397, 220, 528, 236], ['Elizabeth St', 445, 285, 492, 436], ['La Trobe St', 302, 572, 446, 526], ['La Trobe St', 860, 376, 1002, 330], ['Lonsdale St', 856, 525, 1002, 478], ['Bourke St', 945, 645, 1068, 606], ['Bourke St', 312, 876, 437, 840], ['Queen St', 412, 596, 450, 710], ['Collins St', 1043, 774, 1163, 738], ['Collins St', 138, 1098, 258, 1062], ['Elizabeth St', 646, 842, 696, 990], ['Russell St', 943, 814, 986, 940], ['Queen St', 527, 944, 565, 1056], ['William St', 378, 958, 420, 1088], ['Market St', 458, 998, 498, 1116], ['Flinders St', 530, 1124, 667, 1078], ['Kings Way', 328, 1220, 344, 1352], ['Batman Ave', 1170, 958, 1292, 1046], ['St Kilda Rd', 946, 1226, 990, 1356], ['Albert St', 1175, 424, 1290, 438], ['Albert St', 1322, 454, 1436, 468], ['Victoria Parade', 1324, 366, 1524, 394], ['Chen', 36, 96, 40, 28]],
    [['Smith S', 290, 120, 302, 28], ['Gertrude St', 65, 200, 217, 213], ['Gipps St', 634, 110, 743, 122], ['Hoddle St', 746, 358, 760, 232], ['Langridge St', 785, 286, 953, 302], ['Nicholson St', 998, 422, 1018, 260], ['Victoria Cr', 1104, 192, 1160, 314], ['Albert St', 542, 546, 657, 560], ['Baker St', 1316, 602, 1428, 610], ['Church St', 1216, 735, 1234, 606], ['Clarendon St', 260, 838, 280, 668], ['Wellington Pa', 364, 922, 528, 944], ['rade', 532, 948, 598, 982], ['Highett St', 1256, 902, 1384, 918], ['Lennox St', 904, 1138, 922, 1012], ['Church St', 1142, 1264, 1156, 1136]],
    [['Victoria St', 452, 590, 580, 618], ['Walmer St', 342, 378, 356, 256], ['Carson St', 855, 396, 866, 270], ['Burnley St', 260, 940, 276, 806], ['Burnley St', 200, 1350, 218, 1216], ['Power St', 1266, 1012, 1282, 896], ['Bridge Rd', 365, 1156, 496, 1174], ['Denham St', 1014, 1132, 1158, 1150], ['Mary', 1330, 990, 1394, 1000]]
  ],
  m: [
    [['Lauren', 848, 110, 860, 28], ['Elm St', 1130, 38, 1208, 46], ['Miller St', 1087, 184, 1186, 192], ['Ireland St', 994, 262, 1092, 326], ['Batman St', 1372, 546, 1487, 508], ['Village St', 1328, 1148, 1386, 1246], ['N Wharf Rd', 478, 1126, 608, 1156], ['S Wharf R', 608, 1334, 722, 1360]],
    [['Howard St', 106, 156, 122, 36], ['William St', 104, 206, 144, 324], ['Bowen St', 668, 300, 706, 406], ['Swanston St', 682, 512, 730, 650], ['Little Bourke St', 936, 578, 1110, 520], ['Little Collins St', 978, 720, 1150, 660], ['Flinders Ln', 1063, 840, 1190, 802], ['Fitzroy St', 1322, 284, 1334, 176]],
    [['Young St', 6, 300, 18, 200], ['Gore St', 196, 326, 206, 240], ['Oxfor', 366, 88, 374, 28], ['Cambridge', 406, 148, 424, 24], ['Derby St', 323, 260, 423, 270], ['Cromwell St', 638, 384, 658, 238], ['Islington St', 690, 422, 708, 292], ['Charles St', 950, 150, 966, 28], ['William St', 1060, 432, 1072, 312], ['Powlett St', 440, 578, 456, 462], ['Garfield St', 797, 602, 922, 614], ['York St', 762, 688, 843, 698], ['Egan St', 753, 750, 842, 760], ['Erin St', 794, 934, 873, 942], ['Lincoln St', 1279, 672, 1394, 684], ['Laity St', 1272, 708, 1356, 716], ['Bank St', 1102, 978, 1116, 888], ['Somerset St', 1334, 876, 1476, 890], ['Agnes St', 104, 1050, 118, 948], ['Vale St', 530, 1092, 542, 1014], ['Berry St', 578, 1118, 594, 1026], ['AFL Way', 416, 1202, 458, 1290], ['Rowena Parade', 690, 1204, 873, 1226], ['Richmond Ter', 882, 1318, 1044, 1336]],
    [['Nolan Ave', 434, 120, 550, 136], ['Raven St', 378, 302, 480, 314], ['Young St', 391, 412, 493, 422], ['Stevenson St', 618, 400, 766, 418], ['Stawell St', 951, 100, 1068, 114], ['Miller Grove', 975, 520, 1116, 536], ['Elm St', 756, 690, 832, 698], ['Oak St', 743, 754, 818, 762], ['Muir St', 686, 806, 770, 816], ['Pine St', 930, 748, 1010, 758], ['Grove Rd', 1046, 798, 1150, 808], ['Melville St', 1010, 856, 1132, 870], ['Smart St', 1080, 920, 1182, 932], ['College St', 1050, 970, 1170, 982], ['Connell St', 1064, 1066, 1184, 1080], ['Lennox St', 1045, 1200, 1158, 1214], ['Kent St', 158, 848, 242, 856], ['Appleton St', 323, 864, 456, 880], ['North St', 318, 912, 412, 922], ['Crown St', 318, 960, 424, 974], ['Blazey St', 305, 1006, 411, 1020], ['Palmer St', 91, 1092, 208, 1102], ['Bond St', 38, 490, 48, 400], ['Duke St', 82, 496, 92, 406], ['Grosvenor St', 126, 504, 144, 352], ['Flockhart St', 170, 508, 186, 368], ['Bennett St', 106, 726, 122, 606], ['Leslie St', 160, 712, 170, 614], ['Davison St', 212, 742, 234, 622], ['Hunter St', 56, 1316, 72, 1208], ['River St', 484, 1106, 498, 1016], ['Wood St', 796, 1204, 804, 1112], ['Foley St', 1256, 670, 1270, 578], ['Edgecombe St', 940, 430, 964, 262], ['Thornton St', 996, 438, 1016, 304], ['Howard St', 1042, 406, 1062, 286], ['Tara Ave', 1100, 444, 1116, 344], ['Hawt', 1346, 830, 1402, 836], ['Kinko', 1334, 912, 1400, 920], ['Linda', 1370, 1040, 1410, 1096]]
  ],
  w: [
    [['Moonee Ponds Creek', 494, 574, 556, 318], ['Yarra River', 697, 1268, 830, 1304]],
    [['Yarra River', 706, 1150, 845, 1134]],
    [['Yarra River', 1336, 286, 1474, 286]],
    [['Yarra River', 318, 516, 456, 520]]
  ],
  d: [
    [['DOCKLANDS', 616, 1003, 900, 1003]], [],
    [['ABBOTSFORD', 993, 97, 1304, 97], ['EAST', 378, 626, 490, 626], ['MELBOURNE', 292, 676, 578, 676], ['RICHMOND', 1228, 1202, 1474, 1202]]
  ],
  p: [
    [['South Dynon', 44, 167, 207, 167], ['Rail Yard', 67, 199, 183, 199], ['Melbourne Wholesale', 150, 366, 394, 366], ['Fish Market', 204, 395, 339, 395], ['Melbourne Yard', 807, 408, 1014, 408], ['E-Gate', 740, 492, 829, 492], ['The District', 616, 752, 745, 752], ['Docklands', 622, 780, 740, 780], ['Melbourne Central', 454, 822, 665, 822], ['City Studios', 491, 850, 627, 850], ['Docklands', 1142, 965, 1259, 965], ['Stadium', 1152, 993, 1247, 993], ['Spencer', 1394, 917, 1488, 917], ['Outlet Centre', 1365, 945, 1517, 945]],
    [['Queen Victoria', 224, 323, 387, 323], ['Market', 267, 351, 345, 351], ['Royal Exhibition', 990, 137, 1170, 137], ['Building', 1033, 166, 1127, 166], ['St Vincent’s', 1191, 307, 1323, 307], ['Hospital', 1211, 336, 1304, 336], ['Treasury Reserve', 1204, 704, 1401, 704], ['Freshwater Place', 468, 1317, 665, 1317], ['Melbourne Park', 1376, 1299, 1584, 1299], ['SI', 1287, 520, 1308, 520], ['C', 1295, 549, 1308, 549]],
    [['College', 656, 40, 741, 40], ['Richmond', 980, 676, 1109, 676], ['Housing Estate', 952, 712, 1139, 712], ['Carlton United', 1274, 408, 1438, 408], ['Breweries', 1298, 437, 1415, 437], ['Melbourne', 226, 1200, 349, 1200], ['Cricket Ground', 201, 1229, 372, 1229]],
    [['Convent', 94, 52, 185, 52], ['Paddocks', 86, 80, 195, 80], ['Xavier Collage', 430, 223, 591, 223], ['Burke Hall', 450, 251, 572, 251], ['Victoria Gardens', 272, 743, 459, 743], ['Shopping Centre', 272, 771, 461, 771]]
  ],
  g: [
    [], [['Flagstaff Gardens', 51, 570, 250, 570], ['Treasury Gardens', 1231, 816, 1431, 816], ['Birrarung Marr', 1151, 1141, 1323, 1141], ['Queen Victoria', 1029, 1341, 1191, 1341], ['Atherton Gardens', 1370, 135, 1571, 135], ['Housing Estate', 1386, 163, 1555, 163]],
    [['Fitzroy Gardens', 34, 701, 241, 701], ['Yarra Park', 443, 1184, 584, 1184]],
    [['Studley Park', 194, 202, 340, 202], ['Golf Course', 202, 231, 333, 231], ['Pridmore Park', 516, 956, 684, 956], ['St. James Park', 812, 1219, 984, 1219], ['Grace Park', 1275, 1214, 1400, 1214]]
  ],
  b: [
    [['Southern Cross', 1375, 1089, 1551, 1089]],
    [['Flagstaff', 179, 643, 279, 643], ['Melbourne', 530, 514, 651, 514], ['Central', 549, 543, 632, 543], ['Parliament', 1096, 578, 1222, 578], ['Flinders Street', 755, 1066, 925, 1066]],
    [['Collingwood', 797, 128, 937, 128], ['North', 767, 538, 831, 538], ['Richmond', 743, 567, 856, 567], ['West Richmond', 654, 857, 830, 857], ['Jolimont', 275, 967, 374, 967]],
    [['Hawthorn', 1002, 1327, 1112, 1327]]
  ]
};
for (const cls in along) along[cls].forEach((list, i) => list.forEach(([t, x1, y1, x2, y2]) => {
  const len = Math.hypot(x2 - x1, y2 - y1), a = Math.atan2(y2 - y1, x2 - x1) * 180 / Math.PI;
  add('text', { class: cls, dy: '.35em', textLength: len.toFixed(1), lengthAdjust: cls === 'd' ? 'spacing' : 'spacingAndGlyphs', transform: `translate(${x1 + i * TILE} ${y1}) rotate(${a.toFixed(1)})` }, t);
}));

// Route shields
[
  [['50', 436, 72], ['32', 90, 395], ['32', 431, 440], ['32', 816, 580], ['32', 1079, 603], ['50', 1268, 384], ['32', 1409, 450], ['55', 1242, 827], ['30', 1403, 1335], ['60', 1449, 396], ['50', 1454, 818], ['55', 1454, 1248]],
  [['32', 273, 192], ['32', 608, 248], ['46', 937, 231], ['32', 1074, 324], ['32', 137, 386], ['60', 126, 698], ['30', 1223, 866], ['60', 288, 1143], ['30', 337, 1196], ['50', 186, 1300], ['S 20', 1102, 1256], ['S 20', 723, 1320]],
  [['29', 765, 199], ['32', 205, 409], ['32', 569, 429], ['32', 894, 468], ['32', 1311, 525], ['29', 701, 667], ['30', 100, 876], ['30', 786, 1022], ['30', 1041, 1061], ['30', 1214, 1077], ['29', 636, 1136], ['2', 1454, 223]],
  [['2', 909, 43], ['S 34', 1084, 259], ['21', 1354, 402], ['S 36', 1245, 452], ['32', 341, 576], ['32', 705, 639], ['32', 1081, 698], ['S 36', 961, 828], ['30', 242, 1137], ['21', 1246, 1137], ['30', 710, 1191]]
].forEach((list, i) => list.forEach(([t, x, y]) => {
  const w = t.length > 2 ? 74 : 45, cx = x + i * TILE;
  add('rect', { class: 'shield', x: cx - w / 2, y: y - 16, width: w, height: 32, rx: 7 });
  add('text', { class: 'n', x: cx, y: y + 8, 'text-anchor': 'middle' }, t);
}));
add('path', { d: 'M484 53H525V81H484ZM276 1350H318V1358H276Z', fill: '#168a34' });
add('text', { class: 'n state', x: 505, y: 75, 'text-anchor': 'middle' }, '3');

// Point symbols
const icons = {
  tree: ['M0-14C8-14 9-9 12-7C17-2 10 5 3 3L4 12H-4L-3 3C-10 5-17-2-12-7C-9-9-8-14 0-14Z', '#268000'],
  dot: ['M-5 0A5 5 0 1 1 5 0A5 5 0 1 1-5 0Z', '#6c4b35'],
  basket: ['M-10-2H10L7 10H-7ZM-8-3L-4-10H4L8-3H5L3-7H-3L-5-3Z', '#6c4331'],
  stadium: ['M-2-12L6-8L0-5V0H10V8H4V3H-4V8H-10V0H-2Z', '#7a3e32'],
  cross: ['M-3-12H3V-3H12V3H3V12H-3V3H-12V-3H-3Z', '#8f4a42'],
  camera: ['M-13-7H-6L-3-10H4L7-7H13V9H-13ZM0-4A5 5 0 1 0 .1-4Z', '#6c3d28'],
  golf: ['M-2-12A3 3 0 1 1 2-8L4 2L8 12H4L0 5L-5 12H-7L-3 0L-7-8L-5-9Z', '#268000'],
  fork: ['M-10-10H-2V0L-4 2V10H-8V2L-10 0ZM3-10H10V-6H7V-2H10V2H7V10H3Z', '#76520b'],
  estate: ['M-2-9H2V-3H9V0H6L9 3Q5 10 0 10Q-5 10-9 3L-6 0H-9V-3H-2ZM-4 3V5H4V3Z', '#268000']
};
[
  ['dot', 126, 140], ['dot', 273, 341], ['dot', 911, 381], ['dot', 783, 464], ['dot', 559, 796], ['basket', 680, 722], ['stadium', 1201, 933],
  ['basket', 1745, 291], ['basket', 1444, 885], ['tree', 1591, 538], ['camera', 2520, 106], ['cross', 2698, 276], ['dot', 2741, 677], ['tree', 2770, 784], ['tree', 2677, 1108], ['tree', 2551, 1309], ['dot', 2006, 1292],
  ['estate', 2911, 103], ['tree', 3018, 662], ['tree', 3394, 1146], ['stadium', 3167, 1168], ['dot', 2921, 1271], ['dot', 4236, 381],
  ['golf', 4586, 170], ['fork', 4830, 190], ['basket', 4687, 713], ['tree', 4920, 923], ['tree', 5218, 1186], ['tree', 5658, 1182], ['fork', 4902, 1346], ['dot', 4459, 26]
].forEach(([k, x, y]) => add('path', { d: icons[k][0], fill: icons[k][1], 'fill-rule': 'evenodd', transform: `translate(${x} ${y})` }));
[[1669, 607], [2031, 477], [2598, 541], [2279, 1030], [1463, 1052], [3747, 91], [3679, 503], [3622, 820], [3204, 931], [5377, 1291]].forEach(([x, y]) => {
  add('rect', { x: x - 18, y: y - 18, width: 36, height: 36, fill: '#4055cf' });
  add('path', { d: 'M-9-13H9V8H-9ZM-5-8V-1H5V-8ZM-5 3h2v2h-2zM3 3h2v2H3zM-7 9H-3L-7 14H-11ZM7 9H3L7 14H11Z', fill: '#fff', 'fill-rule': 'evenodd', transform: `translate(${x} ${y})` });
});
add('circle', { cx: 2799, cy: 576, r: 30, fill: '#111' });
```
